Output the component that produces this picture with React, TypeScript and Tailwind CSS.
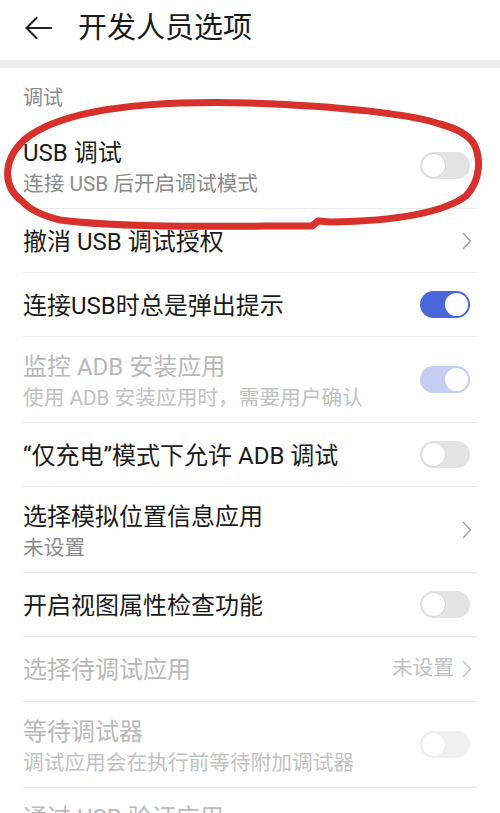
import React from 'react';

type Row = {
  title: string;
  sub?: string;
  kind: 'off' | 'on' | 'chevron';
  disabled?: boolean;
  value?: string;
  h?: string;
};

const rows: Row[] = [
  { title: 'USB 调试', sub: '连接 USB 后开启调试模式', kind: 'off' },
  { title: '撤消 USB 调试授权', kind: 'chevron' },
  { title: '连接USB时总是弹出提示', kind: 'on' },
  { title: '监控 ADB 安装应用', sub: '使用 ADB 安装应用时，需要用户确认', kind: 'on', disabled: true },
  { title: '“仅充电”模式下允许 ADB 调试', kind: 'off' },
  { title: '选择模拟位置信息应用', sub: '未设置', kind: 'chevron' },
  { title: '开启视图属性检查功能', kind: 'off' },
  { title: '选择待调试应用', kind: 'chevron', disabled: true, value: '未设置', h: 'h-[65px]' },
  { title: '等待调试器', sub: '调试应用会在执行前等待附加调试器', kind: 'off', disabled: true },
  { title: '通过 USB 验证应用', sub: '通过 ADB/ADT 检查安装的应用是否存在有害行为', kind: 'off', disabled: true },
];

const Toggle: React.FC<{ on: boolean; disabled?: boolean }> = ({ on, disabled }) => {
  if (on) {
    return (
      <div
        className={`w-[50px] h-[27px] rounded-full flex items-center justify-end p-[2px] ${
          disabled ? 'bg-[#c4cdf2]' : 'bg-[#4a67da]'
        }`}
      >
        <div className="w-[23px] h-[23px] rounded-full bg-white" />
      </div>
    );
  }
  return (
    <div
      className={`w-[50px] h-[27px] rounded-full flex items-center p-[1px] ${
        disabled ? 'bg-[#f0f0f0]' : 'bg-[#e3e3e3]'
      }`}
    >
      <div
        className={`w-[25px] h-[25px] rounded-full bg-white border ${
          disabled ? 'border-[#ececec]' : 'border-[#d6d6d6]'
        }`}
      />
    </div>
  );
};

const Chevron: React.FC<{ light?: boolean }> = ({ light }) => (
  <svg width="10" height="18" viewBox="0 0 10 18" fill="none">
    <path
      d="M1.5 1.5 L8.5 9 L1.5 16.5"
      stroke={light ? '#c4c4c4' : '#a3a3a3'}
      strokeWidth="1.6"
      strokeLinecap="round"
      strokeLinejoin="round"
    />
  </svg>
);

export default function App() {
  return (
    <div
      className="relative w-[500px] min-h-[813px] bg-white overflow-hidden"
      style={{ fontFamily: 'Roboto, "Noto Sans CJK SC", sans-serif' }}
    >
      {/* header */}
      <div className="h-[60px] flex items-center pl-[25px]">
        <svg width="27" height="22" viewBox="0 0 27 22" fill="none" className="mt-[-4px]">
          <path d="M1.5 11 H26" stroke="#222" strokeWidth="2" strokeLinecap="round" />
          <path d="M11.5 1 L1.5 11 L11.5 21" stroke="#222" strokeWidth="2" strokeLinecap="round" strokeLinejoin="round" />
        </svg>
        <div className="ml-[26px] mt-[-3px] text-[29px] text-[#1a1a1a] leading-none">开发人员选项</div>
      </div>
      <div className="h-[8px] bg-[#efefef]" />

      <div className="h-[55px] flex items-center px-[23px] pt-[4px] text-[20px] text-[#8b8b8b]">调试</div>

      <div className="px-[23px]">
        {rows.map((r, i) => {
          const h = r.h ?? (r.sub ? 'h-[86px]' : 'h-[64px]');
          const titleColor = r.disabled ? 'text-[#b9b9b9]' : 'text-[#1b1b1b]';
          const subColor = r.disabled ? 'text-[#c2c2c2]' : 'text-[#8b8b8b]';
          return (
            <div key={i} className={`${h} flex items-center border-b border-[#ebebeb]`}>
              <div className={`flex-1 flex flex-col min-w-0 ${r.sub ? 'pt-[5px]' : 'pt-[2px]'}`}>
                <div className={`text-[24px] leading-[30px] whitespace-nowrap ${titleColor}`}>{r.title}</div>
                {r.sub && (
                  <div className={`text-[20.7px] leading-[28px] mt-[2px] whitespace-nowrap ${subColor}`}>{r.sub}</div>
                )}
              </div>
              <div className="flex items-center pr-[5px]">
                {r.value && <span className="text-[20.7px] text-[#c2c2c2] mr-[8px]">{r.value}</span>}
                {r.kind === 'chevron' ? (
                  <Chevron light={r.disabled} />
                ) : (
                  <div className="mr-[2px]">
                    <Toggle on={r.kind === 'on'} disabled={r.disabled} />
                  </div>
                )}
              </div>
            </div>
          );
        })}
      </div>

      {/* hand-drawn red annotation */}
      <svg
        className="absolute top-0 left-0 pointer-events-none"
        width="500"
        height="813"
        viewBox="0 0 500 813"
        fill="none"
      >
        <path
          d="M22 201 C 4 188, 1 162, 24 140 C 60 110, 140 100, 250 103 C 340 106, 410 114, 440 124 C 455 128, 468 134, 474 144 C 481 158, 481 180, 466 196 C 444 212, 400 221, 330 222 L 318 221 L 312 226 C 220 226, 120 228, 60 220 C 40 215, 28 208, 22 201 Z"
          stroke="#d8302a"
          strokeWidth="7"
          strokeLinejoin="round"
          strokeLinecap="round"
        />
      </svg>
    </div>
  );
}
